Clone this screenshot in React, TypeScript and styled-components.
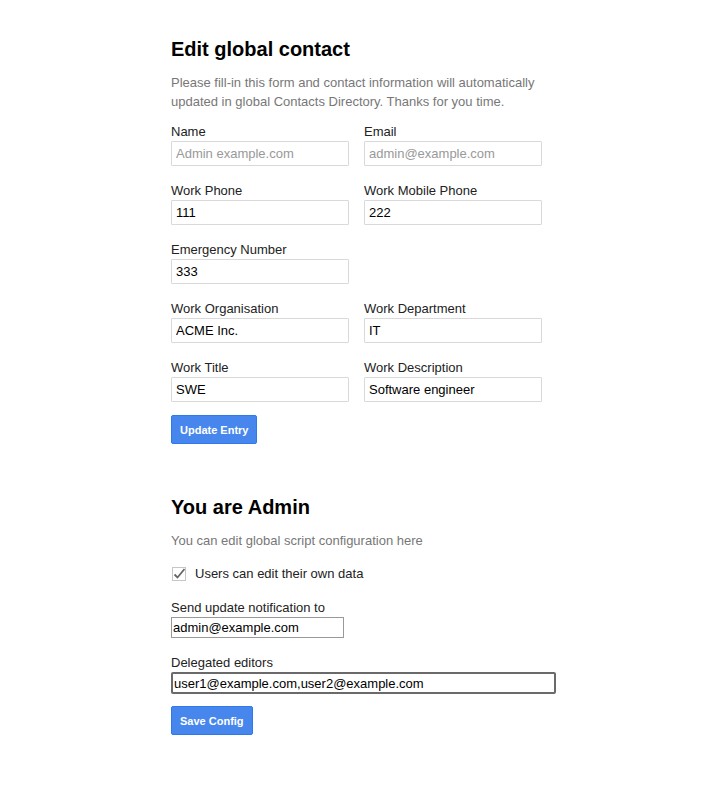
import React from "react";
import styled, { createGlobalStyle } from "styled-components";

const Global = createGlobalStyle`
  html, body { margin: 0; padding: 0; background: #fff; }
  body { font-family: "Liberation Sans", Arial, sans-serif; font-size: 13px; color: #222; }
  * { box-sizing: border-box; }
`;

const Page = styled.div`
  width: 375px;
  margin: 0 auto;
  padding-top: 36px;
  padding-bottom: 40px;
`;

const Section = styled.section`
  display: block;
`;

const Title = styled.h2`
  font-size: 20px;
  font-weight: bold;
  color: #000;
  margin: 0 0 11px 0;
  line-height: 26px;
`;

const Desc = styled.p`
  color: #777;
  font-size: 13px;
  line-height: 19px;
  margin: 0 0 13px 0;
`;

const Rows = styled.div`
  display: flex;
  flex-direction: column;
  gap: 17px;
  margin-bottom: 13px;
`;

const Row = styled.div`
  display: flex;
  gap: 15px;
`;

const Field = styled.div<{ $w?: number }>`
  display: flex;
  flex-direction: column;
  width: ${(p) => p.$w ?? 178}px;
`;

const Label = styled.label`
  font-size: 13px;
  line-height: 16px;
  color: #222;
  margin-bottom: 1px;
`;

const TextInput = styled.input`
  width: 178px;
  height: 25px;
  border: 1px solid #d9d9d9;
  border-radius: 1px;
  padding: 0 4px;
  font-family: "Liberation Sans", Arial, sans-serif;
  font-size: 13px;
  color: #000;
  background: #fff;
  outline: none;
  &::placeholder { color: #999; }
`;

const Button = styled.button`
  height: 29px;
  padding: 0 8px;
  border: 1px solid #3079ed;
  border-radius: 2px;
  background: #4787ed;
  color: #fff;
  font-family: "Liberation Sans", Arial, sans-serif;
  font-size: 11px;
  font-weight: bold;
  cursor: pointer;
`;

const CheckRow = styled.div`
  display: flex;
  align-items: center;
  gap: 9px;
  padding-top: 3px;
  margin: 0 0 18px 1px;
  font-size: 13px;
  color: #222;
  line-height: 16px;
`;

const Box = styled.span`
  display: inline-flex;
  width: 14px;
  height: 14px;
`;

const PlainField = styled.div<{ $mb: number }>`
  display: flex;
  flex-direction: column;
  margin-bottom: ${(p) => p.$mb}px;
`;

const PlainInput = styled.input<{ $w: number; $focus?: boolean }>`
  width: ${(p) => p.$w}px;
  height: ${(p) => (p.$focus ? 22 : 21)}px;
  border: ${(p) => (p.$focus ? "2px solid #6a6a6a" : "1px solid #999")};
  border-radius: ${(p) => (p.$focus ? "2px" : "0")};
  padding: 0 1px;
  font-family: "Liberation Sans", Arial, sans-serif;
  font-size: 13px;
  color: #000;
  background: #fff;
  outline: none;
`;

const Divider = styled.div`
  height: 50px;
`;

export default function App() {
  return (
    <>
      <Global />
      <Page>
        <Section>
          <Title>Edit global contact</Title>
          <Desc>
            Please fill-in this form and contact information will automatically updated in
            global Contacts Directory. Thanks for you time.
          </Desc>
          <Rows>
            <Row>
              <Field>
                <Label>Name</Label>
                <TextInput placeholder="Admin example.com" />
              </Field>
              <Field>
                <Label>Email</Label>
                <TextInput placeholder="admin@example.com" />
              </Field>
            </Row>
            <Row>
              <Field>
                <Label>Work Phone</Label>
                <TextInput defaultValue="111" />
              </Field>
              <Field>
                <Label>Work Mobile Phone</Label>
                <TextInput defaultValue="222" />
              </Field>
            </Row>
            <Row>
              <Field>
                <Label>Emergency Number</Label>
                <TextInput defaultValue="333" />
              </Field>
            </Row>
            <Row>
              <Field>
                <Label>Work Organisation</Label>
                <TextInput defaultValue="ACME Inc." />
              </Field>
              <Field>
                <Label>Work Department</Label>
                <TextInput defaultValue="IT" />
              </Field>
            </Row>
            <Row>
              <Field>
                <Label>Work Title</Label>
                <TextInput defaultValue="SWE" />
              </Field>
              <Field>
                <Label>Work Description</Label>
                <TextInput defaultValue="Software engineer" />
              </Field>
            </Row>
          </Rows>
          <Button>Update Entry</Button>
        </Section>
        <Divider />
        <Section>
          <Title>You are Admin</Title>
          <Desc>You can edit global script configuration here</Desc>
          <CheckRow>
            <Box>
              <svg width="14" height="14" viewBox="0 0 14 14">
                <rect x="0.5" y="0.5" width="13" height="13" fill="#fff" stroke="#c6c6c6" />
                <path d="M2.5 7.5 L5.5 10.5 L12.5 2" fill="none" stroke="#666" strokeWidth="1.8" />
              </svg>
            </Box>
            Users can edit their own data
          </CheckRow>
          <PlainField $mb={17}>
            <Label>Send update notification to</Label>
            <PlainInput $w={173} defaultValue="admin@example.com" />
          </PlainField>
          <PlainField $mb={12}>
            <Label>Delegated editors</Label>
            <PlainInput $w={385} $focus defaultValue="user1@example.com,user2@example.com" />
          </PlainField>
          <Button>Save Config</Button>
        </Section>
      </Page>
    </>
  );
}
